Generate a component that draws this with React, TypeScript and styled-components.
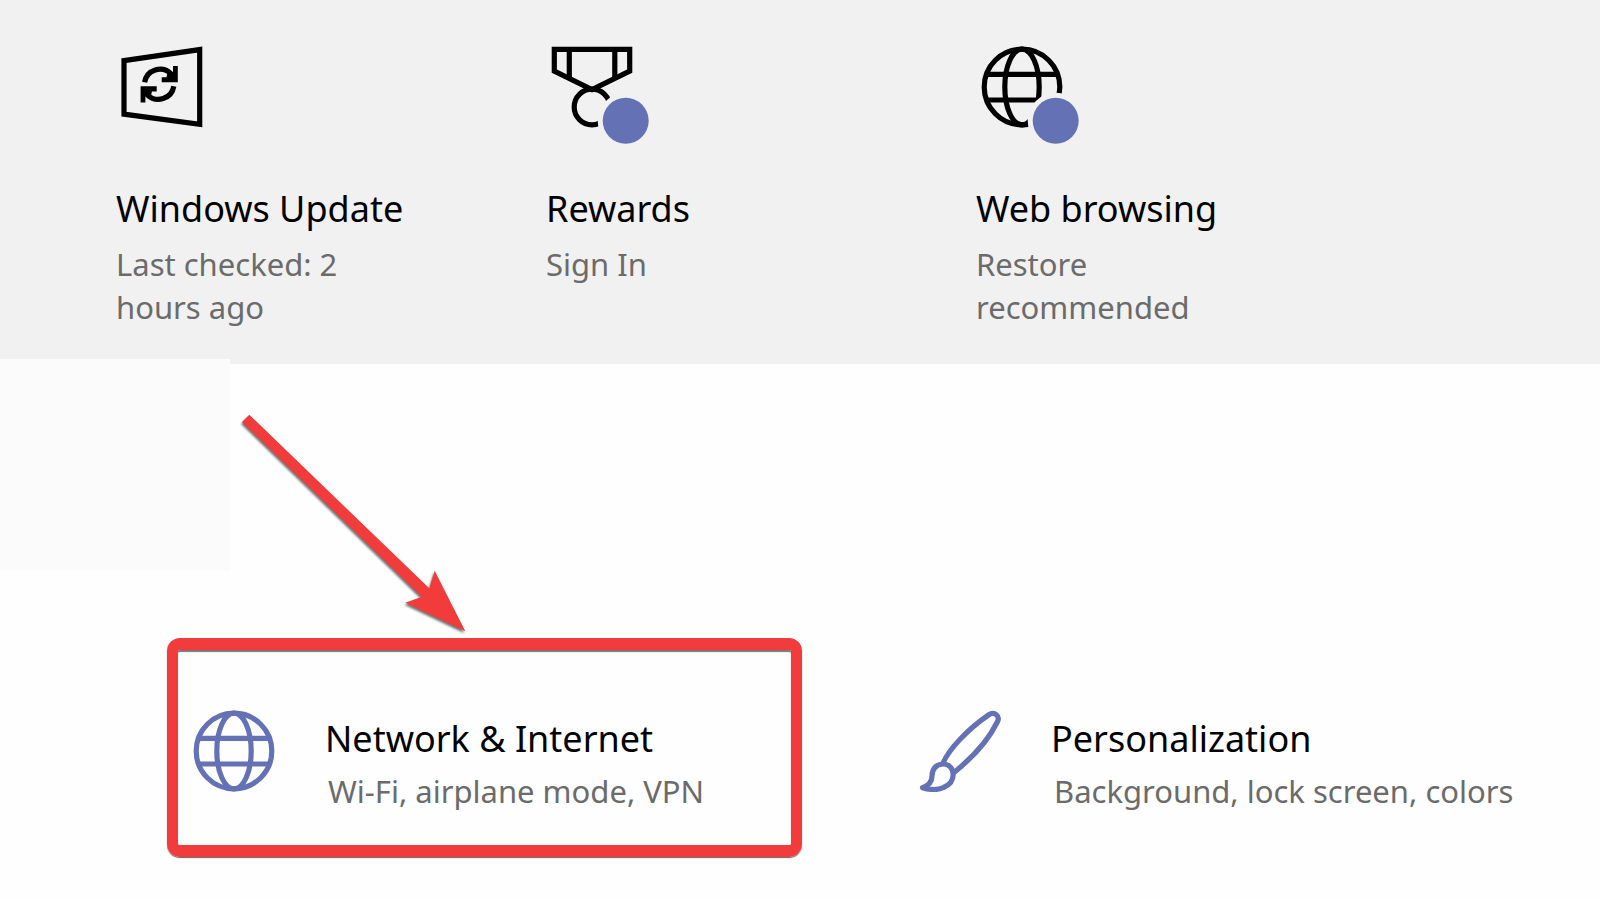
import React from "react";
import styled, { createGlobalStyle } from "styled-components";

const ACCENT = "#6471b5";
const MARK = "#f23c3c";

const GlobalStyle = createGlobalStyle`
  *, *::before, *::after { box-sizing: border-box; }
  body {
    margin: 0;
    background: #fefefe;
    font-family: "Noto Sans", "Open Sans", sans-serif;
  }
`;

const Page = styled.main`
  min-height: 100vh;
`;

const StatusBar = styled.header`
  display: grid;
  grid-template-columns: repeat(3, minmax(0, 430px));
  padding: 46px 16px 35px 116px;
  background: #f1f1f1;
`;

const StatusItem = styled.a`
  display: flex;
  flex-direction: column;
  align-items: flex-start;
  color: #000;
  text-decoration: none;
`;

const StatusIcon = styled.svg`
  width: 100px;
  height: 100px;
  margin: 0 0 39px 5px;
`;

const Title = styled.span`
  font-size: 36px;
  line-height: 48px;
  white-space: nowrap;
`;

const StatusNote = styled.span`
  max-width: 260px;
  margin-top: 10px;
  color: #6b6b6b;
  font-size: 31px;
  line-height: 43px;
`;

const Settings = styled.section`
  position: relative;
  padding: 274px 72px 40px 167px;
`;

const Patch = styled.div`
  position: absolute;
  top: -5px;
  left: 0;
  width: 230px;
  height: 212px;
  background: #fbfbfb;
`;

const Pointer = styled.svg`
  position: absolute;
  top: 36px;
  left: 230px;
  width: 250px;
  height: 250px;
  filter: drop-shadow(-1px 2px 1px rgba(0, 0, 0, 0.55));
`;

const Categories = styled.nav`
  display: grid;
  grid-template-columns: repeat(2, minmax(0, 1fr));
  gap: 91px;
`;

const Category = styled.a<{ $marked?: boolean }>`
  display: flex;
  gap: 50px;
  padding: 60px 15px 32px;
  border: solid ${(p) => (p.$marked ? MARK : "transparent")};
  border-width: 12px 11px;
  border-radius: 13px;
  box-shadow: ${(p) =>
    p.$marked ? "0 1px 1px #666, inset 0 2px 1px #777" : "none"};
  color: #000;
  text-decoration: none;
`;

const CategoryIcon = styled.svg`
  flex: none;
  width: 82px;
  height: 82px;
`;

const CategoryText = styled.div`
  display: flex;
  flex-direction: column;
  margin-top: 5px;
`;

const CategoryNote = styled.span`
  margin-top: 7px;
  padding-left: 3px;
  color: #6b6b6b;
  font-size: 31px;
  line-height: 43px;
  white-space: nowrap;
`;

const GlobeLines = () => (
  <>
    <circle cx="41" cy="41" r="37.8" />
    <ellipse cx="41" cy="41" rx="17.2" ry="37.8" />
    <path d="M6 28.3H76M6 54H76" />
  </>
);

const BadgeMask = ({ id }: { id: string }) => (
  <mask id={id} maskUnits="userSpaceOnUse" x="0" y="0" width="100" height="100">
    <rect width="100" height="100" fill="#fff" />
    <circle cx="74.7" cy="74.7" r="28" fill="#000" />
  </mask>
);

const Badge = () => <circle cx="74.7" cy="74.7" r="23" fill={ACCENT} />;

const RefreshHalf = () => (
  <>
    <path d="M23.6 36.3A15.6 15.6 0 0 1 50 27.8" fill="none" stroke="#000" strokeWidth="5.2" />
    <path d="M52 20H56.8V36.3H40.7V31.2H45.5L47 24L52 26.2Z" />
  </>
);

const UpdateIcon = () => (
  <StatusIcon viewBox="0 0 100 100" aria-hidden="true">
    <path d="M3 14.6L78.7 3.6V78.4L3 68.2Z" fill="none" stroke="#000" strokeWidth="5.2" />
    <RefreshHalf />
    <g transform="rotate(180 38.2 38.3)">
      <RefreshHalf />
    </g>
  </StatusIcon>
);

const RewardsIcon = () => (
  <StatusIcon viewBox="0 0 100 100" aria-hidden="true">
    <BadgeMask id="rewards-cut" />
    <g fill="none" stroke="#000" strokeWidth="5.2" mask="url(#rewards-cut)">
      <path d="M3.3 3.3H78.7V25.2L41 43.5L3.3 25.2Z" />
      <path d="M18.3 3V32M63.8 3V32" />
      <circle cx="41" cy="61" r="17.8" />
    </g>
    <Badge />
  </StatusIcon>
);

const BrowsingIcon = () => (
  <StatusIcon viewBox="0 0 100 100" aria-hidden="true">
    <BadgeMask id="browsing-cut" />
    <g fill="none" stroke="#000" strokeWidth="5.2" mask="url(#browsing-cut)">
      <GlobeLines />
    </g>
    <Badge />
  </StatusIcon>
);

const NetworkIcon = () => (
  <CategoryIcon viewBox="0 0 82 82" fill="none" stroke={ACCENT} strokeWidth="5.2" aria-hidden="true">
    <GlobeLines />
  </CategoryIcon>
);

const BrushIcon = () => (
  <CategoryIcon
    viewBox="0 0 82 82"
    fill="none"
    stroke={ACCENT}
    strokeWidth="5.2"
    strokeLinejoin="round"
    aria-hidden="true"
  >
    <path d="M24 53C30 39 49 19 69.5 5C75.5 1 81.5 6 78.3 12C69 31 53 48 35 62.5" />
    <path d="M24 54C16.5 54 13 60 13 66C13 72 9.5 75.5 3.5 77.7C11 80 19 80 24.5 77.5C30.5 75 34.2 70 34.2 64.5C34.2 58.5 30 54 24 54Z" />
  </CategoryIcon>
);

const statuses = [
  { title: "Windows Update", note: "Last checked: 2 hours ago", Icon: UpdateIcon },
  { title: "Rewards", note: "Sign In", Icon: RewardsIcon },
  { title: "Web browsing", note: "Restore recommended", Icon: BrowsingIcon },
];

const categories = [
  { title: "Network & Internet", note: "Wi-Fi, airplane mode, VPN", Icon: NetworkIcon, marked: true },
  { title: "Personalization", note: "Background, lock screen, colors", Icon: BrushIcon, marked: false },
];

export default function App() {
  return (
    <Page>
      <GlobalStyle />
      <StatusBar>
        {statuses.map(({ title, note, Icon }) => (
          <StatusItem href="#" key={title}>
            <Icon />
            <Title>{title}</Title>
            <StatusNote>{note}</StatusNote>
          </StatusItem>
        ))}
      </StatusBar>
      <Settings>
        <Patch />
        <Categories>
          {categories.map(({ title, note, Icon, marked }) => (
            <Category href="#" key={title} $marked={marked}>
              <Icon />
              <CategoryText>
                <Title>{title}</Title>
                <CategoryNote>{note}</CategoryNote>
              </CategoryText>
            </Category>
          ))}
        </Categories>
        <Pointer viewBox="0 0 250 250" aria-hidden="true">
          <path
            d="M19.3 14.7L199.3 188.3L204.7 170.7L235.3 231.3L175.3 202.7L191.7 196.7L12 22Z"
            fill={MARK}
          />
        </Pointer>
      </Settings>
    </Page>
  );
}
